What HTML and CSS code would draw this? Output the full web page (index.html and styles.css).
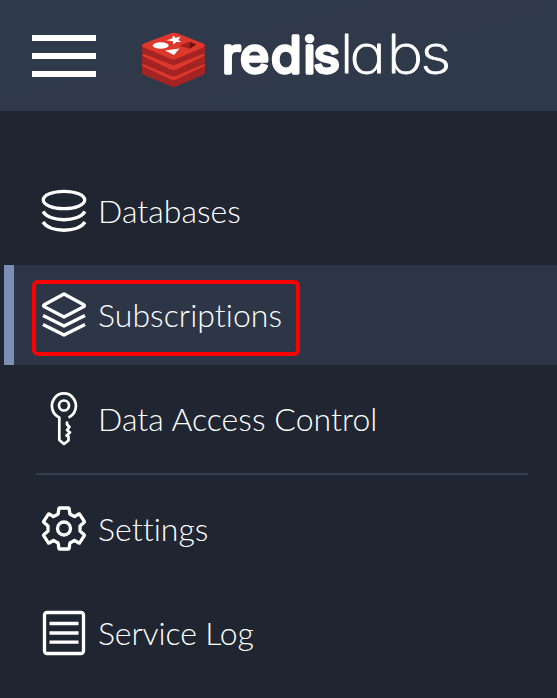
FILE: index.html
```html
<!DOCTYPE html>
<html lang="en">
<head>
<meta charset="utf-8">
<title>Redis Labs</title>
<link rel="stylesheet" href="styles.css">
</head>
<body>
<header class="header">
  <button class="menu" aria-label="Menu"><span></span><span></span><span></span></button>
  <svg class="logo" width="66" height="56" viewBox="0 0 66 56">
    <g id="layers">
      <path fill="#a32422" d="M1 33v8q0 1 2 2l27 11.500q2.500 1 5 0l27-11.500q2-1 2-2v-8z"/>
      <path fill="#dc382c" d="M1 33l1-1.500L33 19l30 12.500 1 1.500q0 .8-2 1.700L35 47.500q-2.500 1-5 0L3 34.700Q1 33.800 1 33z"/>
      <path fill="#a32422" d="M1 23v7.500q0 1 2 2l27 11.500q2.500 1 5 0l27-11.500q2-1 2-2V23z"/>
      <path fill="#dc382c" d="M1 23l1-1.500L33 9l30 12.500 1 1.500q0 .8-2 1.700L35 37.500q-2.500 1-5 0L3 24.700Q1 23.800 1 23z"/>
      <path fill="#a32422" d="M1 13v7q0 1 2 2l27 10.500q2.500 1 5 0L62 22q2-1 2-2v-7z"/>
      <path fill="#dc382c" d="M1 13.500q0 1 2 2l27 11.500q2.500 1 5 0l27-11.500q2-1 2-2 0-1-2-2L37 1.600q-4-1.600-8 0L3 11.500q-2 1-2 2z"/>
    </g>
    <ellipse cx="19.700" cy="13.500" rx="7.900" ry="3.200" fill="#fff"/>
    <path fill="#fff" d="m32.200 3.500 2.300 2.200 5-1-2.200 3.200 3 2.200-4.900-.2-3 2.500-.6-3.200-6.400-1 5.400-1.500zM24 18.500l14.500-2-5.500 6.500z"/>
    <path fill="#9f211d" d="m38.500 13.500 10-3.800v7.300z"/><path fill="#6b120d" d="m48.500 9.700 7 2.800-7 4.300z"/>
  </svg>
  <svg class="wordmark" width="232" height="60" viewBox="0 0 232 60">
    <text class="redis" y="46.500" x="0 18 49 81.500 91.500">redis</text>
    <text class="labs" y="47" x="101.500 110 142 171">labs</text>
  </svg>
</header>
<nav class="nav">
  <a class="item">
    <svg class="icon" viewBox="0 0 48 56"><ellipse cx="24" cy="18" rx="20.700" ry="8.700"/><path d="M3 29.500c7 11 35 11 42 0M3 40c7 11 35 11 42 0"/></svg>
    <span>Databases</span>
  </a>
  <a class="item active">
    <svg class="icon" viewBox="0 0 48 56"><path d="M24 8 4.200 18.800q-1.300.9 0 1.800L24 31l19.800-10.400q1.300-.9 0-1.800zM3 29.500 24 40l21-10.500M3 38.500 24 49l21-10.500"/></svg>
    <span>Subscriptions</span>
    <i class="highlight"></i>
  </a>
  <a class="item">
    <svg class="icon key" viewBox="0 0 48 56"><path d="M28.500 27.500a12 12.500 0 1 0-9.200 0V50l4.700 4 4.500-3.500v-4l-2-1 3.500-3-3-2.500 2.500-3-2.500-2.500V31.500"/><circle cx="24" cy="15.500" r="5"/></svg>
    <span>Data Access Control</span>
  </a>
  <hr>
  <a class="item">
    <svg class="icon" viewBox="0 0 48 56"><path d="M19.500 8h9q.5 0 .6.600l.8 5.400 4.600 2.700 4.300-2.700q.5-.3.800.2l4.700 7.100q.3.500-.1.900L40 26v5l4.200 3.800q.4.400.1.900l-4.700 7.100q-.3.500-.8.200l-4.300-2.700-4.600 2.700-.8 5.400q-.1.600-.6.600h-9q-.5 0-.6-.6l-.8-5.400-4.600-2.700L9.200 43q-.5.300-.8-.2l-4.700-7.100q-.3-.5.100-.9L8 31v-5l-4.200-3.800q-.4-.4-.1-.9l4.700-7.100q.3-.5.800-.2l4.300 2.700 4.600-2.700.8-5.400q.1-.6.600-.6z"/><circle cx="24" cy="28.500" r="6.500"/></svg>
    <span>Settings</span>
  </a>
  <a class="item log">
    <svg class="icon" viewBox="0 0 48 56"><rect x="4.500" y="8.500" width="39" height="41" rx="2.500"/><path d="M9.500 19.500h29M9.500 29h29M9.500 38.200h29"/></svg>
    <span>Service Log</span>
  </a>
</nav>
</body>
</html>
```
FILE: styles.css
```css
* { box-sizing: border-box; }
body {
  margin: 0;
  width: 557px;
  height: 698px;
  overflow: hidden;
  background: #202631;
  color: #fff;
  font-family: Lato, "Liberation Sans", sans-serif;
}
.header {
  display: flex;
  height: 111px;
  padding-left: 32px;
  background: linear-gradient(165deg, #2f3b4b, #2f394a 50%, #2e3a4a);
}
.menu {
  display: flex;
  flex-direction: column;
  gap: 12px;
  width: 64px;
  margin-top: 35px;
  padding: 0;
  border: 0;
  background: none;
}
.menu span { width: 64px; height: 6px; background: #fff; }
.logo { margin: 32px 0 0 45px; }
.wordmark { margin: 26px 0 0 15px; overflow: visible; }
.wordmark text {
  font-family: Inter, sans-serif;
  fill: #fff;
  stroke: #fff;
  stroke-linejoin: round;
}
.wordmark .redis {
  font-size: 50px;
  font-weight: 400;
  stroke-width: 3.4;
}
.wordmark .labs {
  font-size: 53px;
  font-weight: 200;
  font-feature-settings: "cv11";
  stroke-width: .8;
  transform: scaleX(1.16);
}
.nav { padding-top: 50px; }
.item {
  display: flex;
  align-items: center;
  position: relative;
  height: 100px;
  margin: 0 0 4px 4px;
  padding-left: 36px;
  font-size: 32px;
  font-weight: 300;
  font-variant-ligatures: none;
  letter-spacing: .03px;
  line-height: 40px;
  white-space: nowrap;
}
.item span { margin-left: 10px; }
.log { letter-spacing: -.13px; }
.active {
  padding-left: 26px;
  border-left: 10px solid #7c90b3;
  background: #2d3647;
}
.icon {
  width: 48px;
  height: 56px;
  margin-bottom: 2px;
  fill: none;
  stroke: #fff;
  stroke-width: 3.3;
  stroke-linejoin: round;
}
.key { stroke-width: 2.7; }
.highlight {
  position: absolute;
  left: 18px;
  top: 15px;
  width: 268px;
  height: 76px;
  border: 4px solid #f00;
  border-radius: 6px;
}
hr {
  width: 492px;
  height: 2px;
  margin: 0 0 4px 36px;
  border: 0;
  background: #343e50;
}
```
